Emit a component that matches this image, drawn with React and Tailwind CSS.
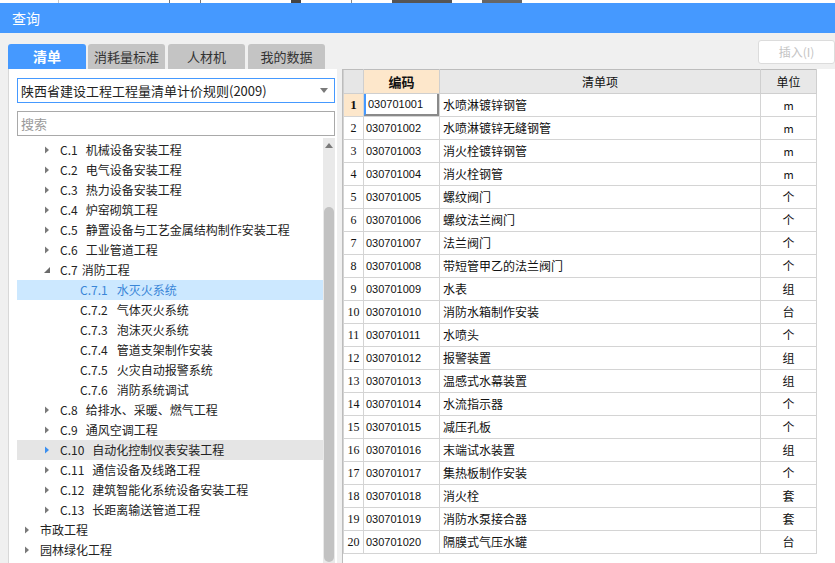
import React from 'react';

const tree = [
  { level: 1, code: 'C.1', name: '机械设备安装工程' },
  { level: 1, code: 'C.2', name: '电气设备安装工程' },
  { level: 1, code: 'C.3', name: '热力设备安装工程' },
  { level: 1, code: 'C.4', name: '炉窑砌筑工程' },
  { level: 1, code: 'C.5', name: '静置设备与工艺金属结构制作安装工程' },
  { level: 1, code: 'C.6', name: '工业管道工程' },
  { level: 1, code: 'C.7', name: '消防工程', open: true, tight: true },
  { level: 2, code: 'C.7.1', name: '水灭火系统', selected: true },
  { level: 2, code: 'C.7.2', name: '气体灭火系统' },
  { level: 2, code: 'C.7.3', name: '泡沫灭火系统' },
  { level: 2, code: 'C.7.4', name: '管道支架制作安装' },
  { level: 2, code: 'C.7.5', name: '火灾自动报警系统' },
  { level: 2, code: 'C.7.6', name: '消防系统调试' },
  { level: 1, code: 'C.8', name: '给排水、采暖、燃气工程' },
  { level: 1, code: 'C.9', name: '通风空调工程' },
  { level: 1, code: 'C.10', name: '自动化控制仪表安装工程', hover: true },
  { level: 1, code: 'C.11', name: '通信设备及线路工程' },
  { level: 1, code: 'C.12', name: '建筑智能化系统设备安装工程' },
  { level: 1, code: 'C.13', name: '长距离输送管道工程' },
  { level: 0, name: '市政工程' },
  { level: 0, name: '园林绿化工程' },
];

const rows = [
  ['水喷淋镀锌钢管', 'm'],
  ['水喷淋镀锌无缝钢管', 'm'],
  ['消火栓镀锌钢管', 'm'],
  ['消火栓钢管', 'm'],
  ['螺纹阀门', '个'],
  ['螺纹法兰阀门', '个'],
  ['法兰阀门', '个'],
  ['带短管甲乙的法兰阀门', '个'],
  ['水表', '组'],
  ['消防水箱制作安装', '台'],
  ['水喷头', '个'],
  ['报警装置', '组'],
  ['温感式水幕装置', '组'],
  ['水流指示器', '个'],
  ['减压孔板', '个'],
  ['末端试水装置', '组'],
  ['集热板制作安装', '个'],
  ['消火栓', '套'],
  ['消防水泵接合器', '套'],
  ['隔膜式气压水罐', '台'],
];

const uiFont = { fontFamily: '"Noto Sans CJK SC", "Liberation Sans", sans-serif' };

const Arrow = ({ open, blue }) =>
  open ? (
    <svg width="8" height="8" viewBox="0 0 8 8" className="shrink-0">
      <path d="M7 1 L7 7 L1 7 Z" fill="#6b6b6b" />
    </svg>
  ) : (
    <svg width="8" height="8" viewBox="0 0 8 8" className="shrink-0">
      <path d="M2 0.5 L6 4 L2 7.5 Z" fill={blue ? '#3b8fef' : '#7a7a7a'} />
    </svg>
  );

const TreeRow = ({ item }) => {
  const pad = item.level === 0 ? 'pl-[6px]' : item.level === 1 ? 'pl-[26px]' : 'pl-[63px]';
  const bg = item.selected ? 'bg-[#cce8ff]' : item.hover ? 'bg-[#e5e5e5]' : '';
  const color = item.selected ? 'text-[#3a86d8]' : 'text-[#222]';
  return (
    <div className={`h-[20px] flex items-center text-[12px] ${pad} ${bg} ${color}`}>
      {item.level < 2 && <Arrow open={item.open} blue={item.hover} />}
      <span className={item.level < 2 ? 'ml-[9px]' : ''}>
        {item.code && (
          <span className={item.tight ? 'mr-[4px]' : item.level === 2 ? 'mr-[9px]' : 'mr-[8px]'}>
            {item.code}
          </span>
        )}
        {item.name}
      </span>
    </div>
  );
};

export default function App() {
  return (
    <div className="w-[835px] h-[563px] overflow-hidden bg-[#f0f0f0] flex flex-col" style={uiFont}>
      {/* background window sliver */}
      <div className="h-[3px] bg-white flex shrink-0">
        <div className="w-[58px]" />
        <div className="w-px bg-[#c8c8c8]" />
        <div className="w-[110px]" />
        <div className="w-px bg-[#777]" />
        <div className="w-[30px]" />
        <div className="w-px bg-[#777]" />
        <div className="w-[90px]" />
        <div className="w-[10px] bg-[#444]" />
        <div className="w-[50px]" />
        <div className="w-px bg-[#888]" />
        <div className="w-[40px]" />
        <div className="w-[60px] bg-[#555]" />
        <div className="w-[30px]" />
        <div className="w-[40px] bg-[#666]" />
      </div>

      {/* title bar */}
      <div className="h-[30px] bg-[#4599ff] flex items-center pl-[12px] text-white text-[14px] shrink-0">
        查询
      </div>

      {/* tabs row */}
      <div className="h-[29px] mt-[7px] flex shrink-0">
        <div className="flex items-end pl-[8px] gap-[2px] text-[13px]">
          <div className="w-[78px] h-[25px] rounded-t-[3px] bg-[#4599ff] text-white font-bold text-[14px] flex items-center justify-center">
            清单
          </div>
          <div className="w-[77px] h-[25px] rounded-t-[3px] bg-[#c4c4c4] text-[#333] flex items-center justify-center">
            消耗量标准
          </div>
          <div className="w-[77px] h-[25px] ml-[1px] rounded-t-[3px] bg-[#c4c4c4] text-[#333] flex items-center justify-center">
            人材机
          </div>
          <div className="w-[77px] h-[25px] ml-[1px] rounded-t-[3px] bg-[#c4c4c4] text-[#333] flex items-center justify-center">
            我的数据
          </div>
        </div>
        <div className="ml-auto w-[77px] h-[24px] rounded-[3px] border border-[#dcdcdc] bg-white text-[#c4c4c4] text-[12px] flex items-center justify-center">
          插入(I)
        </div>
      </div>

      {/* content */}
      <div className="flex flex-1 min-h-0">
        {/* left panel */}
        <div className="ml-[8px] w-[329px] bg-white border-l border-[#d8d8d8] flex flex-col pl-[8px] pr-[2px] pt-[9px]">
          <div className="h-[25px] border border-[#4599ff] flex items-center pl-[3px] pr-[6px] text-[13px] text-[#222]">
            <span className="flex-1">陕西省建设工程工程量清单计价规则(2009)</span>
            <svg width="8" height="5" viewBox="0 0 8 5">
              <path d="M0 0 L8 0 L4 5 Z" fill="#7a7a7a" />
            </svg>
          </div>
          <div className="h-[25px] mt-[8px] border border-[#a9a9a9] flex items-center pl-[3px] text-[13px] text-[#9a9a9a]">
            搜索
          </div>
          <div className="flex flex-1 min-h-0 mt-[2px]">
            <div className="flex-1 pt-[2px] overflow-hidden">
              {tree.map((item, i) => (
                <TreeRow key={i} item={item} />
              ))}
            </div>
            {/* scrollbar */}
            <div className="w-[12px] bg-[#e9e9e9] flex flex-col items-center">
              <svg width="10" height="16" viewBox="0 0 10 16" className="shrink-0">
                <path d="M1 10 L5 5 L9 10 Z" fill="#7a7a7a" />
              </svg>
              <div className="mt-[53px] w-[10px] flex-1 rounded-[5px] bg-[#c2c2c2] mb-[1px]" />
            </div>
          </div>
        </div>

        {/* right panel */}
        <div className="ml-[5px] flex-1 bg-white border-l border-[#bcbcbc]">
          <table className="table-fixed border-collapse text-[12px] text-[#111]" style={{ width: 474 }}>
            <colgroup>
              <col style={{ width: 20 }} />
              <col style={{ width: 76 }} />
              <col style={{ width: 321 }} />
              <col style={{ width: 56 }} />
            </colgroup>
            <thead>
              <tr className="h-[24px]">
                <th className="bg-[#e6e6e6] border border-[#cfcfcf] border-t-[#bdbdbd]" />
                <th className="bg-[#fde7cb] border border-[#cfcfcf] border-t-[#bdbdbd] font-bold text-[13px]">编码</th>
                <th className="bg-[#e8e8e8] border border-[#cfcfcf] border-t-[#bdbdbd] font-normal">清单项</th>
                <th className="bg-[#e8e8e8] border border-[#cfcfcf] border-t-[#bdbdbd] font-normal">单位</th>
              </tr>
            </thead>
            <tbody>
              {rows.map(([name, unit], i) => {
                const first = i === 0;
                return (
                  <tr key={i} className="h-[23px]">
                    <td
                      className={`border border-[#d4d4d4] text-center p-0 ${first ? 'bg-[#fde7cb] font-bold' : ''}`}
                      style={{ fontFamily: '"Liberation Serif", serif', fontSize: first ? 13 : 12 }}
                    >
                      {i + 1}
                    </td>
                    <td className="border border-[#d4d4d4] p-0 relative">
                      <div
                        className={`h-[22px] flex items-center pl-[2px] text-[11px] ${first ? 'border-l-2 border-l-[#4599ff] border-b-2 border-b-[#8a8a8a] border-r-2 border-r-[#8a8a8a] pl-0' : ''}`}
                        style={{ fontFamily: '"Liberation Sans", sans-serif' }}
                      >
                        0307010{String(i + 1).padStart(2, '0')}
                      </div>
                    </td>
                    <td className="border border-[#d4d4d4] pl-[3px] py-0">{name}</td>
                    <td
                      className={`border border-[#d4d4d4] text-center p-0 ${unit === 'm' ? 'text-[11px]' : ''}`}
                    >
                      {unit}
                    </td>
                  </tr>
                );
              })}
            </tbody>
          </table>
        </div>
      </div>
    </div>
  );
}
